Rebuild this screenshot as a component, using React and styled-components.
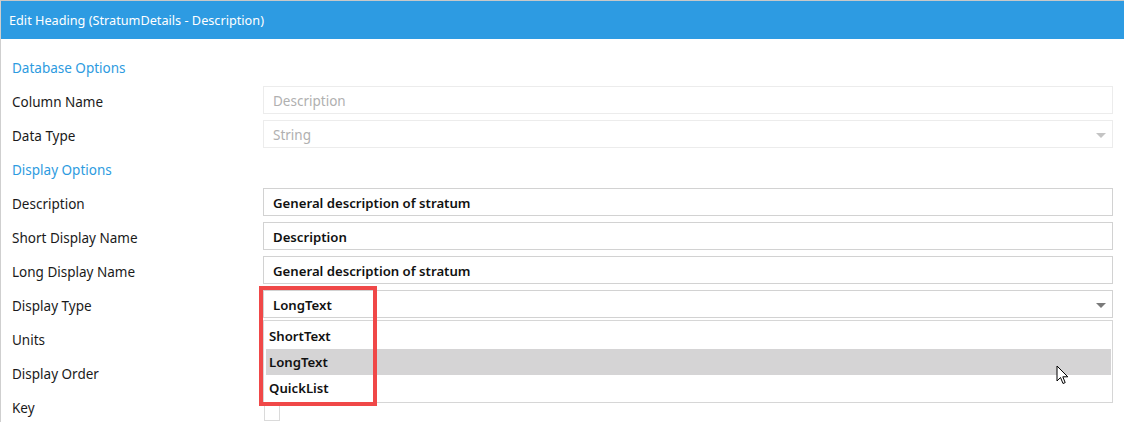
import React from 'react';
import styled, { createGlobalStyle } from 'styled-components';

const GlobalStyle = createGlobalStyle`
  html, body {
    margin: 0;
    padding: 0;
    background: #ffffff;
  }
  body {
    font-family: 'Noto Sans', 'Open Sans', sans-serif;
    font-size: 13.5px;
    color: #1a1a1a;
  }
`;

const Window = styled.div`
  position: relative;
  width: 1124px;
  height: 422px;
  overflow: hidden;
  border-top: 1px solid #c8c8c8;
  border-left: 1px solid #cfcfcf;
  box-sizing: border-box;
  background: #fff;
`;

const TitleBar = styled.header`
  height: 38px;
  background: #2d9be2;
  color: #ffffff;
  display: flex;
  align-items: center;
  padding-left: 8px;
  font-size: 12.7px;
`;

const Form = styled.div`
  display: grid;
  grid-template-columns: 251px 850px;
  grid-auto-rows: 34px;
  padding: 11px 0 0 11px;
`;

const Section = styled.div`
  grid-column: 1 / span 2;
  display: flex;
  align-items: center;
  padding-top: 1px;
  color: #2d9be0;
  font-size: 13.5px;
`;

const Label = styled.div`
  display: flex;
  align-items: center;
  padding-top: 2px;
`;

const Field = styled.div`
  position: relative;
  display: flex;
  align-items: flex-start;
  padding-top: 2px;
`;

const Input = styled.div`
  box-sizing: border-box;
  width: 100%;
  height: 28px;
  display: flex;
  align-items: center;
  padding-left: 9px;
  padding-top: 1px;
  border: 1px solid ${p => (p.$disabled ? '#ececec' : '#d2d2d2')};
  color: ${p => (p.$disabled ? '#b0b0b0' : '#111')};
  font-weight: ${p => (p.$disabled ? 400 : 600)};
  font-size: ${p => (p.$disabled ? '13.5px' : '13.2px')};
  background: #fff;
`;

const Arrow = styled.span`
  position: absolute;
  right: 7px;
  top: 15px;
  width: 0;
  height: 0;
  border-left: 5px solid transparent;
  border-right: 5px solid transparent;
  border-top: 5px solid ${p => (p.$disabled ? '#c4c4c4' : '#7a7a7a')};
`;

const DropList = styled.ul`
  position: absolute;
  top: 32px;
  left: 0;
  right: 0;
  margin: 0;
  padding: 2px 1px 1px 2px;
  list-style: none;
  background: #fff;
  border: 1px solid #d6d6d6;
  z-index: 2;
`;

const Option = styled.li`
  height: 26px;
  display: flex;
  align-items: center;
  padding-left: 3px;
  font-weight: 600;
  font-size: 13.2px;
  color: #111;
  background: ${p => (p.$active ? '#d5d4d5' : 'transparent')};
`;

const Checkbox = styled.span`
  width: 14px;
  height: 14px;
  border: 1px solid #dadada;
  margin-left: 1px;
  margin-top: 13px;
`;

const Callout = styled.div`
  position: absolute;
  left: 258px;
  top: 285px;
  width: 118px;
  height: 120px;
  box-sizing: border-box;
  border: 4px solid #f04848;
  z-index: 3;
  pointer-events: none;
`;

const Pointer = styled.svg`
  position: absolute;
  left: 1055px;
  top: 364px;
  z-index: 4;
`;

const TextRow = ({ label, value, disabled }) => (
  <>
    <Label>{label}</Label>
    <Field>
      <Input $disabled={disabled}>{value}</Input>
    </Field>
  </>
);

export default function App() {
  return (
    <>
      <GlobalStyle />
      <Window>
        <TitleBar>Edit Heading (StratumDetails - Description)</TitleBar>
        <Form>
          <Section>Database Options</Section>
          <TextRow label="Column Name" value="Description" disabled />
          <Label>Data Type</Label>
          <Field>
            <Input $disabled>String</Input>
            <Arrow $disabled />
          </Field>
          <Section>Display Options</Section>
          <TextRow label="Description" value="General description of stratum" />
          <TextRow label="Short Display Name" value="Description" />
          <TextRow label="Long Display Name" value="General description of stratum" />
          <Label>Display Type</Label>
          <Field>
            <Input>LongText</Input>
            <Arrow />
            <DropList>
              <Option>ShortText</Option>
              <Option $active>LongText</Option>
              <Option>QuickList</Option>
            </DropList>
          </Field>
          <Label>Units</Label>
          <Field />
          <Label>Display Order</Label>
          <Field />
          <Label>Key</Label>
          <Field>
            <Checkbox />
          </Field>
        </Form>
        <Callout />
        <Pointer width="14" height="21" viewBox="0 0 14 21">
          <path
            d="M1 1 L1 16 L4.5 12.5 L7 18.5 L9.2 17.6 L6.8 11.8 L11.8 11.8 Z"
            fill="#ffffff"
            stroke="#000000"
            strokeWidth="1"
            strokeLinejoin="miter"
          />
        </Pointer>
      </Window>
    </>
  );
}
